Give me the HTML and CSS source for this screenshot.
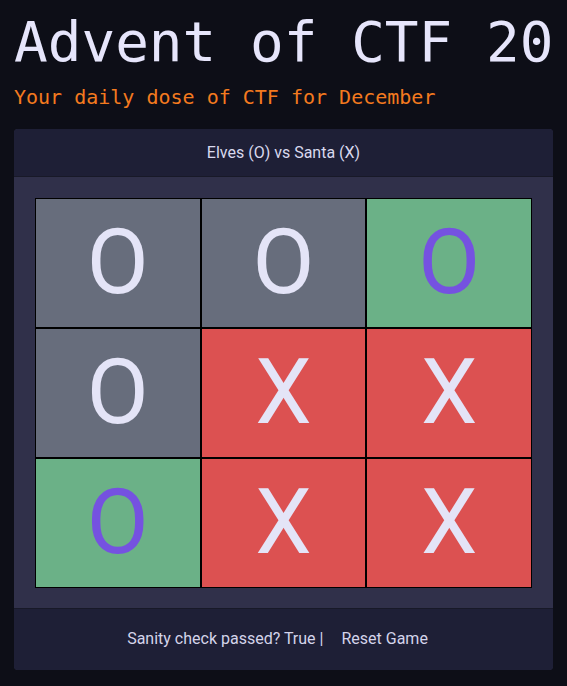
FILE: index.html
```html
<!DOCTYPE html>
<html lang="en">
<head>
<meta charset="utf-8">
<title>Advent of CTF</title>
<link rel="stylesheet" href="styles.css">
</head>
<body>
<main class="page">
  <h1 class="title">Advent of CTF 20</h1>
  <p class="subtitle">Your daily dose of CTF for December</p>
  <section class="card">
    <header class="card-header">Elves (O) vs Santa (X)</header>
    <div class="card-body">
      <div class="board">
        <div class="cell cell-gray">O</div>
        <div class="cell cell-gray">O</div>
        <div class="cell cell-green">O</div>
        <div class="cell cell-gray">O</div>
        <div class="cell cell-red">X</div>
        <div class="cell cell-red">X</div>
        <div class="cell cell-green">O</div>
        <div class="cell cell-red">X</div>
        <div class="cell cell-red">X</div>
      </div>
    </div>
    <footer class="card-footer">
      <span class="status">Sanity check passed? True |</span>
      <button class="reset" type="button">Reset Game</button>
    </footer>
  </section>
</main>
</body>
</html>
```
FILE: styles.css
```css
html, body {
  margin: 0;
  padding: 0;
  background: #0d0e17;
  overflow: hidden;
}
.page {
  padding: 0 14px;
  font-family: Roboto, "Noto Sans", sans-serif;
}
.title {
  margin: 14px 0 0;
  font-family: "DejaVu Sans Mono", monospace;
  font-weight: normal;
  font-size: 56px;
  line-height: 56px;
  color: #e6e5fb;
  white-space: nowrap;
}
.subtitle {
  margin: 17px 0 0;
  font-family: "DejaVu Sans Mono", monospace;
  font-size: 20px;
  line-height: 20px;
  color: #f47a1f;
}
.card {
  margin-top: 22px;
  border-radius: 4px;
  overflow: hidden;
  background: #30304a;
}
.card-header {
  height: 47px;
  border-bottom: 1px solid #181928;
  background: #1e1f36;
  color: #d9d9ee;
  font-size: 16px;
  display: flex;
  align-items: center;
  justify-content: center;
}
.card-body {
  padding: 21px 21px 20px;
}
.board {
  display: grid;
  grid-template-columns: repeat(3, 1fr);
  grid-auto-rows: 130px;
}
.cell {
  border: 1px solid #000;
  display: flex;
  align-items: center;
  justify-content: center;
  font-size: 90px;
  line-height: 1;
  color: #e4e4f7;
}
.cell-gray { background: #676d7c; }
.cell-green { background: #6bb187; color: #7552e0; }
.cell-red { background: #dc5151; }
.card-footer {
  height: 62px;
  box-sizing: border-box;
  padding-bottom: 3px;
  border-top: 1px solid #181928;
  background: #1e1f36;
  color: #d4d4ea;
  font-size: 16px;
  display: flex;
  align-items: center;
  justify-content: center;
}
.reset {
  font-family: inherit;
  font-size: 16px;
  color: #d4d4ea;
  background: transparent;
  border: 0;
  padding: 7px 12px 6px 18px;
}
```
